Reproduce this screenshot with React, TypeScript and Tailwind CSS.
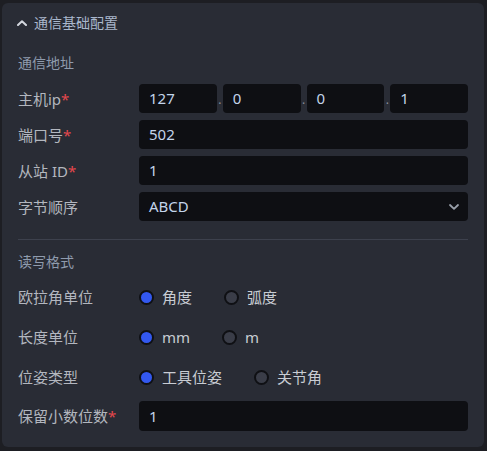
import React, { useState } from "react";

const FONT = { fontFamily: '"Noto Sans", "Noto Sans CJK SC", sans-serif' };

function Label({ text, required }: { text: string; required?: boolean }) {
  return (
    <div className="w-[121px] shrink-0 text-[15px] leading-5 text-[#b3b7bf]">
      {text}
      {required && <span className="text-[#e5484d]">*</span>}
    </div>
  );
}

function TextBox({ value, className = "" }: { value: string; className?: string }) {
  return (
    <div
      className={`h-[29px] flex items-center rounded-[4px] bg-[#0e0f13] pl-[10px] text-[15px] text-[#c3d4ea] ${className}`}
    >
      {value}
    </div>
  );
}

function Dot() {
  return <span className="w-[6px] text-center text-[12px] leading-none text-[#8a8f99] mt-[3px]">.</span>;
}

function Radio({ checked, label, onClick }: { checked: boolean; label: string; onClick: () => void }) {
  return (
    <button type="button" onClick={onClick} className="flex items-center mr-[32px]">
      <span
        className={`w-[15px] h-[15px] rounded-full border-2 border-[#0f1014] ${
          checked ? "bg-[#3358ef]" : "bg-[#3a3d48]"
        }`}
      />
      <span className="ml-[8px] text-[15px] leading-5 text-[#c8ccd3]">{label}</span>
    </button>
  );
}

export default function App() {
  const [open, setOpen] = useState(true);
  const [euler, setEuler] = useState("deg");
  const [len, setLen] = useState("mm");
  const [pose, setPose] = useState("tool");

  return (
    <div className="w-[487px] h-[451px] bg-[#1d1e23] pt-[3px] pl-[2px]" style={FONT}>
      <div className="w-[482px] h-[444px] rounded-[6px] bg-[#292c35]">
        {/* Header */}
        <button
          type="button"
          onClick={() => setOpen(!open)}
          className="h-[40px] w-full flex items-center pl-[15px]"
        >
          <svg width="10" height="6" viewBox="0 0 10 6" fill="none" aria-hidden="true">
            <polyline points="1,5 5,1.2 9,5" stroke="#d3d7de" strokeWidth="2" strokeLinecap="round" strokeLinejoin="round" />
          </svg>
          <span className="ml-[7px] text-[14px] leading-5 text-[#a9b7cc]">通信基础配置</span>
        </button>

        {open && (
          <div className="px-[16px]">
            <div className="mt-[10px] text-[14px] leading-5 text-[#8f9bad]">通信地址</div>

            <div className="mt-[11px] flex flex-col gap-[7px]">
              <div className="flex items-center">
                <Label text="主机ip" required />
                <div className="flex-1 flex items-center">
                  <TextBox value="127" className="flex-1" />
                  <Dot />
                  <TextBox value="0" className="flex-1" />
                  <Dot />
                  <TextBox value="0" className="flex-1" />
                  <Dot />
                  <TextBox value="1" className="flex-1" />
                </div>
              </div>
              <div className="flex items-center">
                <Label text="端口号" required />
                <TextBox value="502" className="flex-1" />
              </div>
              <div className="flex items-center">
                <Label text="从站 ID" required />
                <TextBox value="1" className="flex-1" />
              </div>
              <div className="flex items-center">
                <Label text="字节顺序" />
                <div className="flex-1 h-[29px] flex items-center justify-between rounded-[4px] bg-[#0e0f13] pl-[10px] pr-[9px] text-[15px] text-[#c3d4ea]">
                  <span>ABCD</span>
                  <svg width="10" height="6" viewBox="0 0 10 6" fill="none" aria-hidden="true">
                    <polyline points="1,1 5,4.8 9,1" stroke="#9aa0ab" strokeWidth="1.8" strokeLinecap="round" strokeLinejoin="round" />
                  </svg>
                </div>
              </div>
            </div>

            <div className="mt-[18px] h-px bg-[#3d414d]" />

            <div className="mt-[12px] text-[14px] leading-5 text-[#8f9bad]">读写格式</div>

            <div className="mt-[5px]">
              <div className="h-[40px] flex items-center">
                <Label text="欧拉角单位" />
                <Radio checked={euler === "deg"} label="角度" onClick={() => setEuler("deg")} />
                <Radio checked={euler === "rad"} label="弧度" onClick={() => setEuler("rad")} />
              </div>
              <div className="h-[40px] flex items-center">
                <Label text="长度单位" />
                <Radio checked={len === "mm"} label="mm" onClick={() => setLen("mm")} />
                <Radio checked={len === "m"} label="m" onClick={() => setLen("m")} />
              </div>
              <div className="h-[40px] flex items-center">
                <Label text="位姿类型" />
                <Radio checked={pose === "tool"} label="工具位姿" onClick={() => setPose("tool")} />
                <Radio checked={pose === "joint"} label="关节角" onClick={() => setPose("joint")} />
              </div>
            </div>

            <div className="mt-[4px] flex items-center">
              <Label text="保留小数位数" required />
              <TextBox value="1" className="flex-1 h-[30px]" />
            </div>
          </div>
        )}
      </div>
    </div>
  );
}
